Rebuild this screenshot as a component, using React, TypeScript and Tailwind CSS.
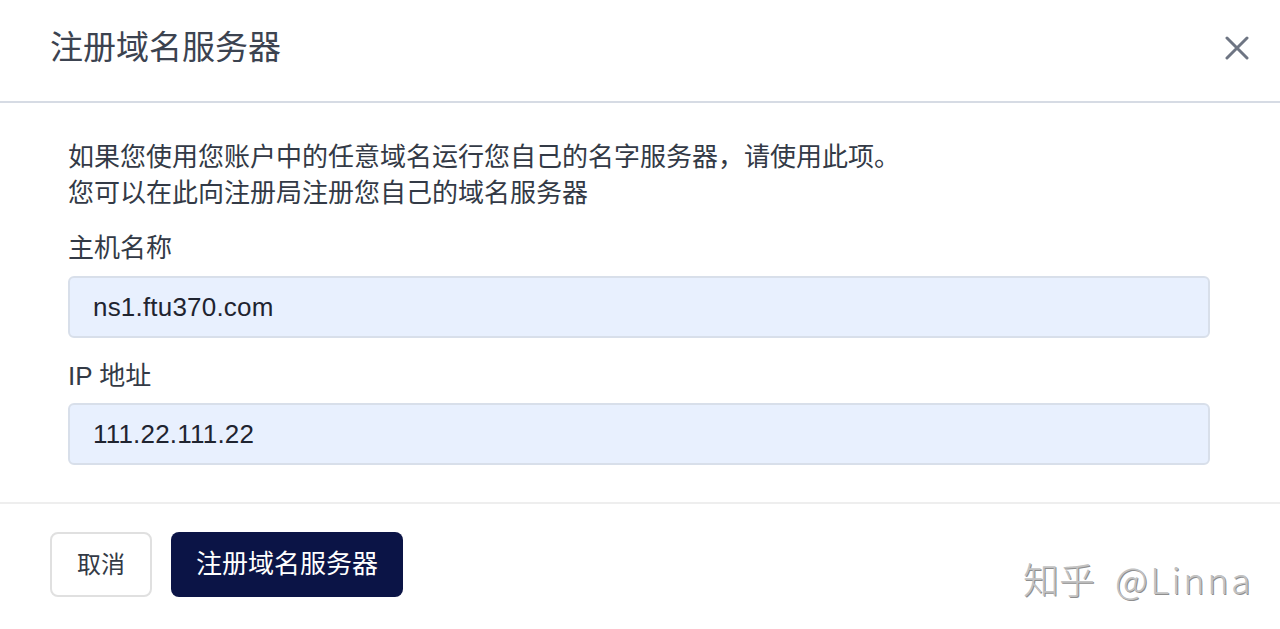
import React from "react";

const font = { fontFamily: '"Liberation Sans", "Noto Sans CJK SC", sans-serif' };

export default function App() {
  return (
    <div
      className="relative w-[1280px] h-[629px] bg-white overflow-hidden flex flex-col"
      style={font}
    >
      <div className="h-[103px] shrink-0 flex items-center justify-between pl-[50px] pr-[31px] border-b-2 border-[#d6dbe4] pb-[6px]">
        <h1 className="text-[33px] leading-[40px] text-[#3c4350] font-normal">注册域名服务器</h1>
        <button className="w-[24px] h-[24px] flex items-center justify-center">
          <svg width="24" height="24" viewBox="0 0 24 24" fill="none">
            <path d="M2 2 L22 22 M22 2 L2 22" stroke="#6e7583" strokeWidth="3" strokeLinecap="round" />
          </svg>
        </button>
      </div>

      <div className="pt-[36px] pl-[68px] pr-[70px] pb-[37px] border-b-2 border-[#eeeeee]">
        <p className="text-[26px] leading-[36px] text-[#333a46]">
          如果您使用您账户中的任意域名运行您自己的名字服务器，请使用此项。
          <br />
          您可以在此向注册局注册您自己的域名服务器
        </p>
        <div className="mt-[19px] text-[26px] leading-[36px] text-[#333a46]">主机名称</div>
        <div className="mt-[10px] h-[62px] rounded-[6px] border-2 border-[#d8dfea] bg-[#e8f0fe] flex items-center pl-[23px] text-[26px] tracking-[0.2px] text-[#1f2430]">
          ns1.ftu370.com
        </div>
        <div className="mt-[20px] text-[26px] leading-[36px] text-[#333a46]">IP 地址</div>
        <div className="mt-[9px] h-[62px] rounded-[6px] border-2 border-[#d8dfea] bg-[#e8f0fe] flex items-center pl-[23px] text-[26px] tracking-[0.2px] text-[#1f2430]">
          111.22.111.22
        </div>
      </div>

      <div className="pt-[28px] pl-[50px] flex gap-[19px]">
        <button className="w-[102px] h-[65px] rounded-[8px] border-2 border-[#e0e0e0] bg-white text-[24px] text-[#333a46]">
          取消
        </button>
        <button className="w-[232px] h-[65px] rounded-[8px] bg-[#0b1446] text-[26px] text-white">
          注册域名服务器
        </button>
      </div>

      <div
        className="absolute left-[1023px] top-[556px] flex items-center text-[36px] leading-[44px] text-[#c2c2c2] whitespace-nowrap font-light"
        style={{ fontFamily: '"Noto Sans CJK SC", "Liberation Sans", sans-serif', textShadow: "1px 1px 0 #8f8f8f" }}
      >
        <span>知乎</span>
        <span className="ml-[20px] tracking-[2.5px]">@Linna</span>
      </div>
    </div>
  );
}
